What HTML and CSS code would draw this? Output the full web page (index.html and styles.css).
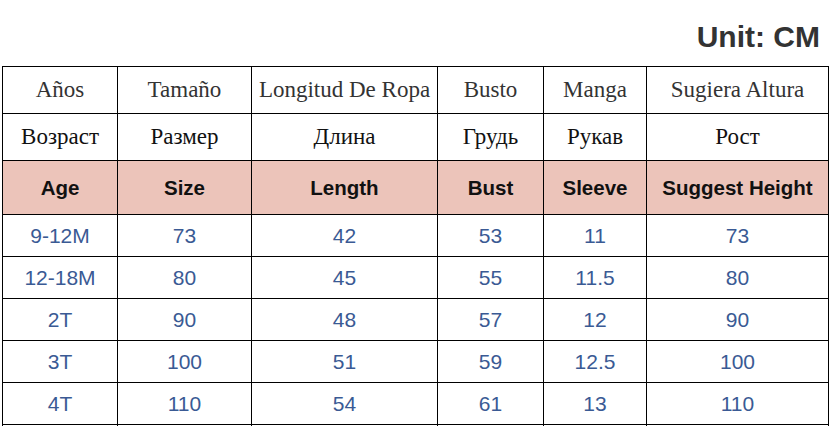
FILE: index.html
```html
<!DOCTYPE html>
<html lang="es">
<head>
<meta charset="utf-8">
<title>Size chart</title>
<link rel="stylesheet" href="styles.css">
</head>
<body>
<div class="page">
  <div class="title">Unit: CM</div>
  <table class="chart">
    <colgroup>
      <col class="c1"><col class="c2"><col class="c3"><col class="c4"><col class="c5"><col class="c6">
    </colgroup>
    <tr class="es">
      <td>Años</td><td>Tamaño</td><td>Longitud De Ropa</td><td>Busto</td><td>Manga</td><td>Sugiera Altura</td>
    </tr>
    <tr class="ru">
      <td>Возраст</td><td>Размер</td><td>Длина</td><td>Грудь</td><td>Рукав</td><td>Рост</td>
    </tr>
    <tr class="en">
      <td>Age</td><td>Size</td><td>Length</td><td>Bust</td><td>Sleeve</td><td>Suggest Height</td>
    </tr>
    <tr class="data"><td>9-12M</td><td>73</td><td>42</td><td>53</td><td>11</td><td>73</td></tr>
    <tr class="data"><td>12-18M</td><td>80</td><td>45</td><td>55</td><td>11.5</td><td>80</td></tr>
    <tr class="data"><td>2T</td><td>90</td><td>48</td><td>57</td><td>12</td><td>90</td></tr>
    <tr class="data"><td>3T</td><td>100</td><td>51</td><td>59</td><td>12.5</td><td>100</td></tr>
    <tr class="data"><td>4T</td><td>110</td><td>54</td><td>61</td><td>13</td><td>110</td></tr>
    <tr class="data"><td></td><td></td><td></td><td></td><td></td><td></td></tr>
  </table>
</div>
</body>
</html>
```

FILE: styles.css
```css
html, body {
  margin: 0;
  padding: 0;
  overflow: hidden;
  background: #fff;
}

.page {
  width: 830px;
  height: 426px;
  overflow: hidden;
}

.title {
  box-sizing: border-box;
  height: 66px;
  padding: 22px 10px 0 0;
  text-align: right;
  font-family: "Liberation Sans", Arial, sans-serif;
  font-weight: bold;
  font-size: 30px;
  line-height: 30px;
  color: #333;
}

.chart {
  margin-left: 2px;
  width: 826px;
  border-collapse: collapse;
  table-layout: fixed;
}

.c1 { width: 115px; }
.c2 { width: 134px; }
.c3 { width: 186px; }
.c4 { width: 106px; }
.c5 { width: 103px; }
.c6 { width: 182px; }

.chart td {
  border: 1px solid #000;
  text-align: center;
  vertical-align: middle;
  padding: 0;
  white-space: nowrap;
}

.es td {
  height: 46px;
  font-family: "Liberation Serif", "Times New Roman", serif;
  font-size: 23px;
  color: #333;
}

.ru td {
  height: 46px;
  font-family: "Liberation Serif", "Times New Roman", serif;
  font-size: 23px;
  color: #111;
}

.en td {
  height: 53px;
  background: #ecc4ba;
  font-family: "Liberation Sans", Arial, sans-serif;
  font-weight: bold;
  font-size: 20.5px;
  color: #111;
}

.data td {
  height: 41px;
  font-family: "Liberation Sans", Arial, sans-serif;
  font-size: 21px;
  color: #3a5a94;
}
```
